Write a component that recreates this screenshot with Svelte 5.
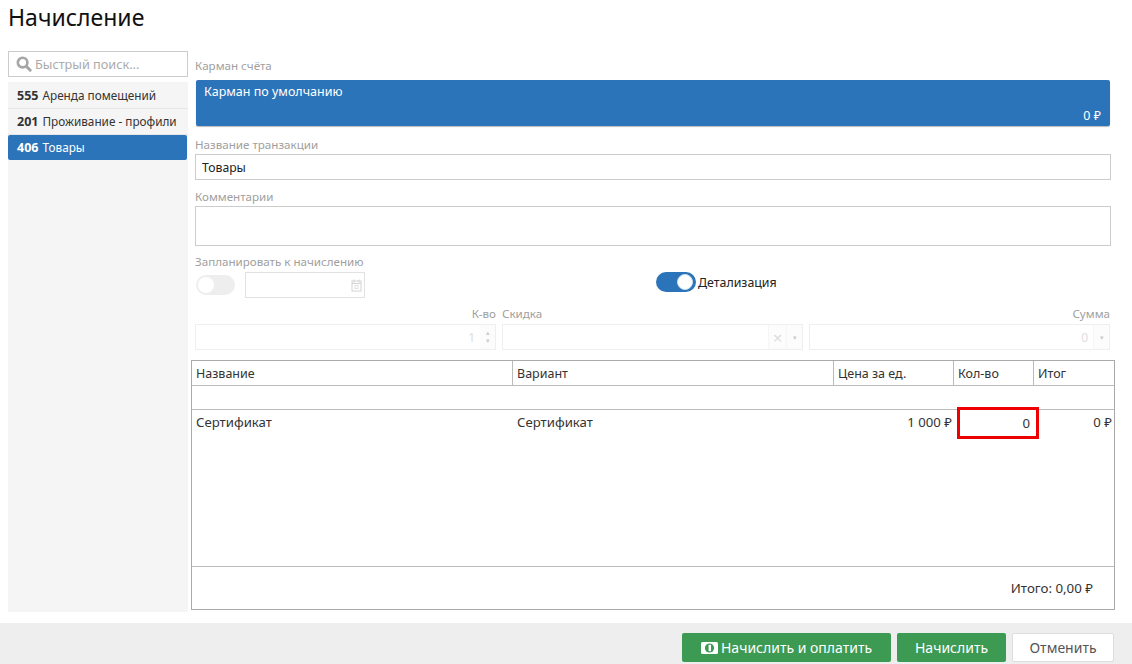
<script>
  const items = [
    { code: '555', name: 'Аренда помещений' },
    { code: '201', name: 'Проживание - профили' },
    { code: '406', name: 'Товары', active: true }
  ];
</script>

<div class="page">
  <h1>Начисление</h1>
  <div class="body">
    <aside>
      <div class="search">
        <svg width="16" height="16" viewBox="0 0 16 16"><circle cx="6.6" cy="6.6" r="4.8" fill="none" stroke="#a6a6a6" stroke-width="2.6"/><path d="M10.4 10.4 14.2 14.2" stroke="#a6a6a6" stroke-width="3" stroke-linecap="round"/></svg>
        <span>Быстрый поиск...</span>
      </div>
      <div class="list">
        {#each items as it}
          <div class="item" class:active={it.active}><b>{it.code}</b> {it.name}</div>
        {/each}
      </div>
    </aside>
    <main>
      <div class="form">
        <div class="label first">Карман счёта</div>
        <div class="pocket">
          <div>Карман по умолчанию</div>
          <div class="amt">0 ₽</div>
        </div>
        <div class="label l2">Название транзакции</div>
        <div class="input">Товары</div>
        <div class="label l3">Комментарии</div>
        <div class="textarea"></div>
        <div class="sched">
          <div class="sched-l">
            <div class="label">Запланировать к начислению</div>
            <div class="sched-row">
              <div class="toggle off"><i></i></div>
              <div class="date">
                <svg width="11" height="13" viewBox="0 0 11 13"><rect x="1" y="2" width="9" height="10" fill="none" stroke="#d4d4d4"/><path d="M1 4.5h9M3 .5v3M8 .5v3" stroke="#d4d4d4" fill="none"/><rect x="4" y="6.5" width="3" height="3" fill="none" stroke="#e0e0e0"/></svg>
              </div>
            </div>
          </div>
          <div class="detail">
            <div class="toggle on"><i></i></div>
            <span>Детализация</span>
          </div>
        </div>
        <div class="triple">
          <div class="fld">
            <div class="label right">К-во</div>
            <div class="dis"><span class="v">1</span><span class="seg spin"><em>▴</em><em>▾</em></span></div>
          </div>
          <div class="fld">
            <div class="label">Скидка</div>
            <div class="dis"><span class="seg x">×</span><span class="seg car">▾</span></div>
          </div>
          <div class="fld">
            <div class="label right">Сумма</div>
            <div class="dis"><span class="v">0</span><span class="seg car">▾</span></div>
          </div>
        </div>
      </div>
      <div class="table">
        <div class="row head">
          <div>Название</div><div>Вариант</div><div>Цена за ед.</div><div>Кол-во</div><div>Итог</div>
        </div>
        <div class="blank"></div>
        <div class="row data">
          <div>Сертификат</div><div>Сертификат</div><div class="r">1 000 ₽</div>
          <div class="qty">0</div>
          <div class="r">0 ₽</div>
        </div>
        <div class="grow"></div>
        <div class="foot">Итого: 0,00 ₽</div>
      </div>
    </main>
  </div>
  <footer>
    <button class="green first-b">
      <svg width="17" height="12" viewBox="0 0 17 12"><rect width="17" height="12" rx="1.5" fill="#fff"/><circle cx="8.5" cy="6" r="4.6" fill="#3d9a52"/><rect x="7.6" y="2.8" width="2.4" height="6.4" fill="#fff"/></svg>
      Начислить и оплатить
    </button>
    <button class="green second-b">Начислить</button>
    <button class="cancel">Отменить</button>
  </footer>
</div>

<style>
  :global(body) { margin: 0; background: #fff; }
  .page {
    width: 1132px; height: 664px; display: flex; flex-direction: column;
    font-family: "Noto Sans", "Open Sans", sans-serif; font-size: 13.2px; color: #333; overflow: hidden;
  }
  h1 { margin: 0; padding: 3px 0 0 8px; height: 48px; box-sizing: border-box; font-size: 23px; line-height: 28px; font-weight: 400; color: #111; }
  .body { display: flex; height: 564px; padding-right: 17px; padding-left: 8px; box-sizing: border-box; width: 1132px; }
  aside { width: 180px; flex: none; display: flex; flex-direction: column; padding-top: 3px; }
  .search {
    height: 26px; box-sizing: border-box; border: 1px solid #ccc; display: flex; align-items: center;
    gap: 3px; padding-left: 7px; color: #aaa; background: #fff; font-size: 12.7px;
  }
  .list { flex: 1; background: #f5f5f5; margin-top: 5px; padding-top: 1px; height: 530px; }
  .item { height: 26px; box-sizing: border-box; line-height: 25px; padding-left: 9px; border-bottom: 1px solid #e6e6e6; white-space: nowrap; color: #333; font-size: 11.75px; }
  .item b { font-weight: 700; font-size: 12.5px; margin-right: 1px; }
  .item.active { background: #2b74ba; color: #fff; border: 0; border-radius: 2px; height: 25px; margin-right: 1px; }
  main { flex: 1; display: flex; flex-direction: column; padding-left: 3px; }
  .form { padding: 0 4px; }
  .label { color: #a0a0a0; font-size: 11.6px; line-height: 16px; white-space: nowrap; }
  .label.first { padding-top: 10px; height: 22px; }
  .pocket {
    height: 46px; box-sizing: border-box; background: #2b74ba; color: #fff; border-radius: 2px;
    padding: 3px 9px 2px 8px; margin: 0 1px; line-height: 17px; box-shadow: 0 1px 1px #bbb;
    display: flex; flex-direction: column; justify-content: space-between; font-size: 12.5px;
  }
  .amt { text-align: right; }
  .l2 { padding-top: 11px; height: 17px; }
  .input { height: 26px; box-sizing: border-box; border: 1px solid #ccc; line-height: 25px; padding-left: 6px; color: #222; font-size: 12.2px; }
  .l3 { padding-top: 9px; height: 17px; }
  .textarea { height: 40px; box-sizing: border-box; border: 1px solid #ccc; }
  .sched { display: flex; margin-top: 8px; height: 44px; }
  .sched-l { width: 170px; }
  .sched-row { display: flex; align-items: center; gap: 10px; margin-top: 2px; }
  .toggle { width: 39px; height: 20px; border-radius: 10px; position: relative; box-sizing: border-box; margin-left: 1px; }
  .toggle i { position: absolute; top: 2px; width: 16px; height: 16px; border-radius: 50%; background: #fff; }
  .toggle.off { background: #eee; }
  .toggle.off i { left: 2px; }
  .toggle.on { background: #2b74ba; margin: 0; width: 40px; }
  .toggle.on i { right: 3px; border: 1px solid #cfe0f0; box-sizing: border-box; }
  .date { width: 120px; height: 26px; box-sizing: border-box; border: 1px solid #e2e2e2; display: flex; align-items: center; justify-content: flex-end; padding-right: 2px; }
  .detail { margin-left: 291px; margin-top: 18px; display: flex; align-items: center; gap: 2px; height: 20px; color: #222; font-size: 12.4px; }
  .triple { display: grid; grid-template-columns: repeat(3, 301px); gap: 6px; margin-top: 8px; }
  .right { text-align: right; }
  .fld .label { height: 18px; }
  .dis { height: 26px; box-sizing: border-box; border: 1px solid #efefef; display: flex; align-items: stretch; justify-content: flex-end; color: #ddd; font-size: 12px; }
  .v { align-self: center; margin-right: 5px; }
  .seg { display: flex; align-items: center; justify-content: center; background: #fcfcfc; }
  .spin { flex-direction: column; width: 15px; font-size: 7px; line-height: 8px; color: #ccc; }
  .spin em { font-style: normal; }
  .x { font-size: 17px; color: #ddd; width: 17px; border-left: 1px solid #f6f6f6; }
  .car { font-size: 7px; color: #ccc; width: 15px; border-left: 1px solid #f6f6f6; }
  .table {
    margin-top: 10px; height: 250px; box-sizing: border-box; border: 1px solid #aaa;
    display: flex; flex-direction: column; width: 924px; color: #333;
  }
  .row { display: grid; grid-template-columns: 321px 321px 120px 80px 1fr; box-sizing: border-box; }
  .head { height: 25px; border-bottom: 1px solid #bbb; line-height: 25px; font-size: 12.5px; }
  .head > div { padding-left: 4px; border-right: 1px solid #bbb; }
  .head > div:last-child { border-right: 0; }
  .blank { height: 24px; box-sizing: border-box; border-bottom: 1px solid #bbb; }
  .data { height: 28px; line-height: 25px; }
  .data > div { padding: 0 2px 0 4px; }
  .r { text-align: right; white-space: nowrap; }
  .data .qty {
    border: 3px solid #e00; margin: -3px 0 0 3px; width: 82px; box-sizing: border-box; height: 32px;
    text-align: right; line-height: 26px; padding: 0 6px 0 0;
  }
  .grow { flex: 1; }
  .foot { height: 43px; border-top: 1px solid #bbb; box-sizing: border-box; text-align: right; line-height: 42px; padding-right: 21px; font-size: 13.3px; }
  footer {
    margin-top: 11px; height: 41px; background: #eee; display: flex; justify-content: flex-end;
    align-items: flex-start; padding: 10px 18px 0 0; box-sizing: border-box; gap: 6px;
  }
  button { height: 29px; font: inherit; font-size: 14px; border-radius: 2px; border: 0; padding: 0; box-sizing: border-box; }
  .green { background: #3d9a52; color: #fff; }
  .first-b { width: 209px; display: flex; align-items: center; justify-content: center; gap: 3px; }
  .second-b { width: 109px; }
  .cancel { width: 102px; background: #fff; color: #555; border: 1px solid #ddd; }
</style>
